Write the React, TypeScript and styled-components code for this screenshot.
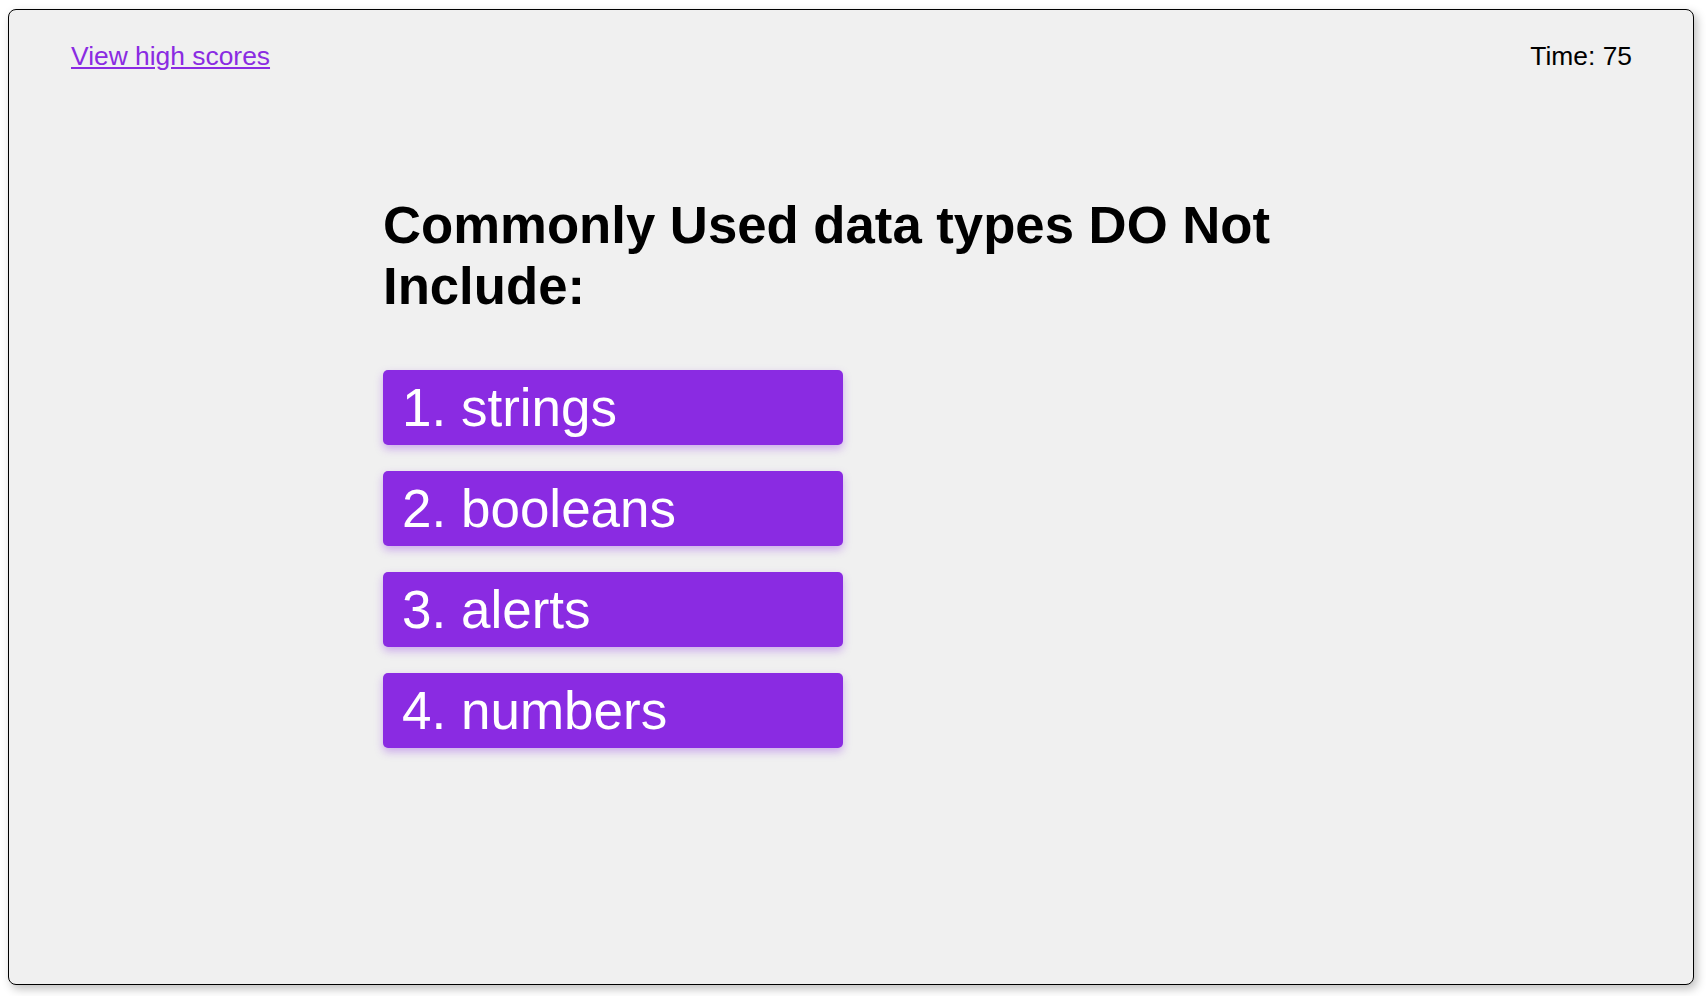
import React from 'react';
import styled, { createGlobalStyle } from 'styled-components';

const GlobalStyle = createGlobalStyle`
  html, body {
    margin: 0;
    background: #ffffff;
  }
  body {
    padding: 9px 12px 12px 8px;
    font-family: "Liberation Sans", Arial, sans-serif;
  }
`;

const Frame = styled.div`
  box-sizing: border-box;
  height: 976px;
  width: 1686px;
  background: #f0f0f0;
  border: 1px solid #000;
  border-radius: 8px;
  box-shadow: 3px 4px 10px rgba(0, 0, 0, 0.25);
  display: flex;
  flex-direction: column;
`;

const Header = styled.header`
  display: flex;
  justify-content: space-between;
  align-items: center;
  padding: 31px 61px 0 62px;
  font-size: 26.4px;
  line-height: 30px;
`;

const ScoresLink = styled.a`
  color: #8a2be2;
  text-decoration: underline;
  cursor: pointer;
`;

const Timer = styled.span`
  color: #000;
`;

const Quiz = styled.main`
  width: 936px;
  margin: 123px auto 0;
  display: flex;
  flex-direction: column;
`;

const Question = styled.h1`
  margin: 0 0 54px;
  font-size: 52.7px;
  font-weight: 700;
  line-height: 61px;
  color: #000;
`;

const Choices = styled.div`
  display: flex;
  flex-direction: column;
  gap: 26px;
`;

const Choice = styled.button`
  box-sizing: border-box;
  width: 460px;
  height: 75px;
  padding: 0 19px;
  border: none;
  border-radius: 5px;
  background: #8a2be2;
  color: #fff;
  font-family: inherit;
  font-size: 53px;
  line-height: 61px;
  text-align: left;
  cursor: pointer;
  box-shadow: 0 4px 9px rgba(138, 43, 226, 0.35);
`;

const choices = ['strings', 'booleans', 'alerts', 'numbers'];

const App: React.FC = () => {
  return (
    <>
      <GlobalStyle />
      <Frame>
        <Header>
          <ScoresLink>View high scores</ScoresLink>
          <Timer>Time: 75</Timer>
        </Header>
        <Quiz>
          <Question>Commonly Used data types DO Not Include:</Question>
          <Choices>
            {choices.map((c, i) => (
              <Choice key={c}>{i + 1}. {c}</Choice>
            ))}
          </Choices>
        </Quiz>
      </Frame>
    </>
  );
};

export default App;
